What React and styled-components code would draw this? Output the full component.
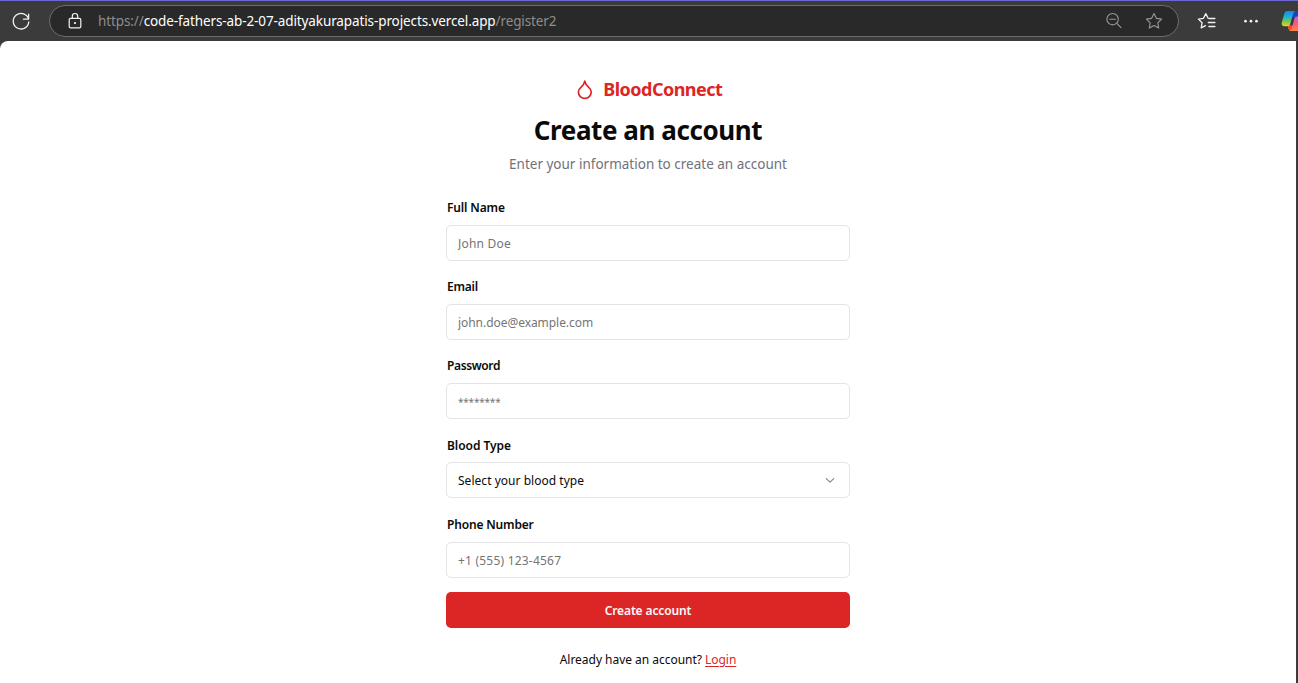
import React from "react";
import styled, { createGlobalStyle } from "styled-components";

const GlobalStyle = createGlobalStyle`
  * { box-sizing: border-box; }
  body { margin: 0; background: #3b3b3b; }
  body, input, button { font-family: "Segoe UI", "Noto Sans", "Open Sans", sans-serif; }
`;

const Window = styled.div`
  display: flex;
  flex-direction: column;
  width: 100%;
  height: 683px;
  overflow: hidden;
  background: #3b3b3b;
  border-top: 1px solid #6a69d1;
`;

const Toolbar = styled.header`
  display: flex;
  align-items: center;
  flex: none;
  height: 40px;
  padding-left: 11px;
`;

const Glyph = styled.svg`
  flex: none;
  display: block;
  width: ${(p) => p.$w || 20}px;
  height: ${(p) => p.$h || 20}px;
  margin-left: ${(p) => p.$ml || 0}px;
  color: ${(p) => p.$color || "#f2f2f2"};
  fill: none;
  stroke: currentColor;
  stroke-width: ${(p) => p.$stroke || 1.2};
  stroke-linecap: round;
  stroke-linejoin: round;
`;

const AddressBar = styled.div`
  display: flex;
  align-items: center;
  flex: none;
  width: 1130px;
  height: 32px;
  margin-left: 18px;
  padding: 0 14px 0 15px;
  border: 1px solid #6c6c6c;
  border-radius: 16px;
  background: #292929;
`;

const Url = styled.div`
  flex: 1;
  padding-left: 13px;
  font-size: 13.5px;
  line-height: 20px;
  letter-spacing: -0.11px;
  white-space: nowrap;
  color: #8d8d8d;
`;

const Host = styled.span`
  color: #fff;
`;

const Page = styled.main`
  display: flex;
  justify-content: center;
  flex: 1;
  margin-right: 2px;
  background: #fff;
  border-top-left-radius: 8px;
`;

const Card = styled.section`
  width: 404px;
  padding-top: 35px;
`;

const Brand = styled.div`
  display: flex;
  align-items: center;
  justify-content: center;
  gap: 8px;
  height: 26px;
  color: #dc2626;
  font-size: 18px;
  font-weight: 700;
  line-height: 26px;
  letter-spacing: -0.52px;
`;

const Title = styled.h1`
  margin: 10px 0 0;
  color: #0a0a0a;
  font-size: 26px;
  font-weight: 700;
  line-height: 36px;
  letter-spacing: -0.42px;
  text-align: center;
`;

const Subtitle = styled.p`
  margin: 5px 0 0;
  color: #71717a;
  font-size: 13.5px;
  line-height: 22px;
  text-align: center;
`;

const Form = styled.form`
  display: flex;
  flex-direction: column;
  gap: 17.47px;
  margin-top: 24px;
`;

const Field = styled.div`
  display: flex;
  flex-direction: column;
  gap: 7.77px;
`;

const Label = styled.label`
  padding-left: 1px;
  color: #0a0a0a;
  font-size: 12px;
  font-weight: 600;
  line-height: 18px;
  letter-spacing: ${(p) => p.$spacing || 0}px;
`;

const Input = styled.input`
  width: 100%;
  height: 36px;
  padding: 1px 11px 0;
  border: 1px solid #e4e4e7;
  border-radius: 5px;
  background: #fff;
  font-size: ${(p) => (p.type === "password" ? 10 : 12)}px;
  letter-spacing: ${(p) => p.$spacing || 0}px;
  outline: none;
  &::placeholder { color: #757575; opacity: 1; }
`;

const Select = styled.div`
  display: flex;
  align-items: center;
  justify-content: space-between;
  height: 36px;
  padding: 1px 12px 0 11px;
  border: 1px solid #e4e4e7;
  border-radius: 5px;
  color: #0a0a0a;
  font-size: 12px;
  letter-spacing: 0.03px;
`;

const Submit = styled.button`
  width: 100%;
  height: 36px;
  margin-top: -3px;
  padding: 1px 0 0;
  border: 0;
  border-radius: 5px;
  background: #dc2626;
  color: #fafafa;
  font-size: 12px;
  font-weight: 600;
  letter-spacing: -0.13px;
`;

const Footer = styled.p`
  margin: 23px 0 0;
  color: #0a0a0a;
  font-size: 12px;
  line-height: 18px;
  letter-spacing: -0.03px;
  text-align: center;
`;

const LoginLink = styled.a`
  color: #dc2626;
  text-decoration: underline;
  text-underline-offset: 2px;
`;

const Refresh = () => (
  <Glyph viewBox="0 0 20 20" $stroke={1.3}>
    <path d="M17.6 8.2A7.8 7.8 0 1 0 17.8 11M17.6 3.1v5.1h-5.1" />
  </Glyph>
);

const Lock = () => (
  <Glyph viewBox="0 0 20 20">
    <rect x="4.2" y="7.3" width="11.6" height="9.6" rx="1.4" />
    <path d="M7.3 7.3V5.2a2.7 2.7 0 0 1 5.4 0v2.1" />
    <circle cx="10" cy="12" r=".5" fill="currentColor" />
  </Glyph>
);

const ZoomOut = () => (
  <Glyph viewBox="0 0 20 20" $color="#989898" $stroke={1.1}>
    <circle cx="8.6" cy="8.2" r="5.7" />
    <path d="M5.8 8.2h5.6M12.8 12.4l4.2 4.2" />
  </Glyph>
);

const STAR = "M10 2.6l2.35 4.75 5.25.77-3.8 3.7.9 5.23L10 14.58l-4.7 2.47.9-5.23-3.8-3.7 5.25-.77z";

const Star = () => (
  <Glyph viewBox="0 0 20 20" $color="#989898" $stroke={1.1} $ml={20}>
    <path d={STAR} />
  </Glyph>
);

const Favorites = () => (
  <Glyph viewBox="0 0 20 20" $ml={18} $stroke={1.3}>
    <path d="M11.1 7.2 8.8 2.6 6.5 7.3l-5.1.8 3.7 3.6-.9 5.2 4.3-2.2M12.1 7.5h5.8M11.3 11.5h6.6M11.9 15.5h6" />
  </Glyph>
);

const More = () => (
  <Glyph viewBox="0 0 20 20" $ml={24}>
    <g fill="currentColor" stroke="none">
      <circle cx="4.5" cy="10.2" r="1.35" />
      <circle cx="10" cy="10.2" r="1.35" />
      <circle cx="15.5" cy="10.2" r="1.35" />
    </g>
  </Glyph>
);

const Copilot = () => (
  <Glyph viewBox="0 0 17 22" $w={17} $h={22} $ml={20}>
    <defs>
      <linearGradient id="ribbonLeft" x1="0" y1="0" x2="0" y2="1">
        <stop offset="0" stopColor="#1687f0" />
        <stop offset=".35" stopColor="#18aee0" />
        <stop offset=".65" stopColor="#6cc45c" />
        <stop offset="1" stopColor="#f4d01e" />
      </linearGradient>
      <linearGradient id="ribbonRight" x1="0" y1="0" x2="0" y2="1">
        <stop offset="0" stopColor="#c35ce0" />
        <stop offset=".5" stopColor="#ff5579" />
        <stop offset="1" stopColor="#ff8745" />
      </linearGradient>
    </defs>
    <g stroke="none">
      <path d="M11 1h4.5c1.5 0 2 1 2.5 3v3h-7z" fill="#1746c4" />
      <path d="M18 6.5h-2.200c-1.3 0-2 .8-2.4 2.2L11.5 15.5H6.8l.8 3.5c.4 1.4 1.2 2 2.6 2H18z" fill="url(#ribbonRight)" />
      <path d="M6.6 15.8h4.9l-1.3 4.2c-1.5.4-2.3-.2-2.7-1.4z" fill="#e8502c" />
      <path d="M6.3 1H14.5c-1.2 0-1.8.9-2.3 2.4L9.2 14c-.5 1.6-1.2 2.2-2.8 2.2H3c-2.1 0-2.7-1.8-2.1-4.1L3.2 4C3.8 2 4.8 1 6.3 1z" fill="url(#ribbonLeft)" />
    </g>
  </Glyph>
);

const Drop = () => (
  <Glyph viewBox="0 -1 24 24" $w={21.6} $h={21.6} $color="#dc2626" $stroke={1.9}>
    <path d="M12 21.7a7.1 7.1 0 0 0 7.1-7.1c0-2-1-3.9-3-5.5S12.500 5 12 2.400C11.500 5 9.900 7.500 7.900 9.100S4.900 12.600 4.900 14.600a7.100 7.100 0 0 0 7.100 7.100z" />
  </Glyph>
);

const Chevron = () => (
  <Glyph viewBox="0 1 24 24" $w={14} $h={14} $color="#858585" $stroke={2}>
    <path d="m5.500 9 6.500 6 6.500-6" />
  </Glyph>
);

export default function App() {
  return (
    <Window>
      <GlobalStyle />
      <Toolbar>
        <Refresh />
        <AddressBar>
          <Lock />
          <Url>https://<Host>code-fathers-ab-2-07-adityakurapatis-projects.vercel.app</Host>/register2</Url>
          <ZoomOut />
          <Star />
        </AddressBar>
        <Favorites />
        <More />
        <Copilot />
      </Toolbar>
      <Page>
        <Card>
          <Brand><Drop />BloodConnect</Brand>
          <Title>Create an account</Title>
          <Subtitle>Enter your information to create an account</Subtitle>
          <Form>
            <Field>
              <Label htmlFor="name" $spacing={-0.15}>Full Name</Label>
              <Input id="name" placeholder="John Doe" $spacing={0.2} />
            </Field>
            <Field>
              <Label htmlFor="email" $spacing={-0.25}>Email</Label>
              <Input id="email" placeholder="john.doe@example.com" $spacing={-0.05} />
            </Field>
            <Field>
              <Label htmlFor="password" $spacing={-0.38}>Password</Label>
              <Input id="password" type="password" placeholder="********" $spacing={-0.2} />
            </Field>
            <Field>
              <Label $spacing={-0.04}>Blood Type</Label>
              <Select>Select your blood type<Chevron /></Select>
            </Field>
            <Field>
              <Label htmlFor="phone" $spacing={-0.17}>Phone Number</Label>
              <Input id="phone" placeholder="+1 (555) 123-4567" $spacing={0.21} />
            </Field>
            <Submit type="button">Create account</Submit>
          </Form>
          <Footer>Already have an account? <LoginLink>Login</LoginLink></Footer>
        </Card>
      </Page>
    </Window>
  );
}
